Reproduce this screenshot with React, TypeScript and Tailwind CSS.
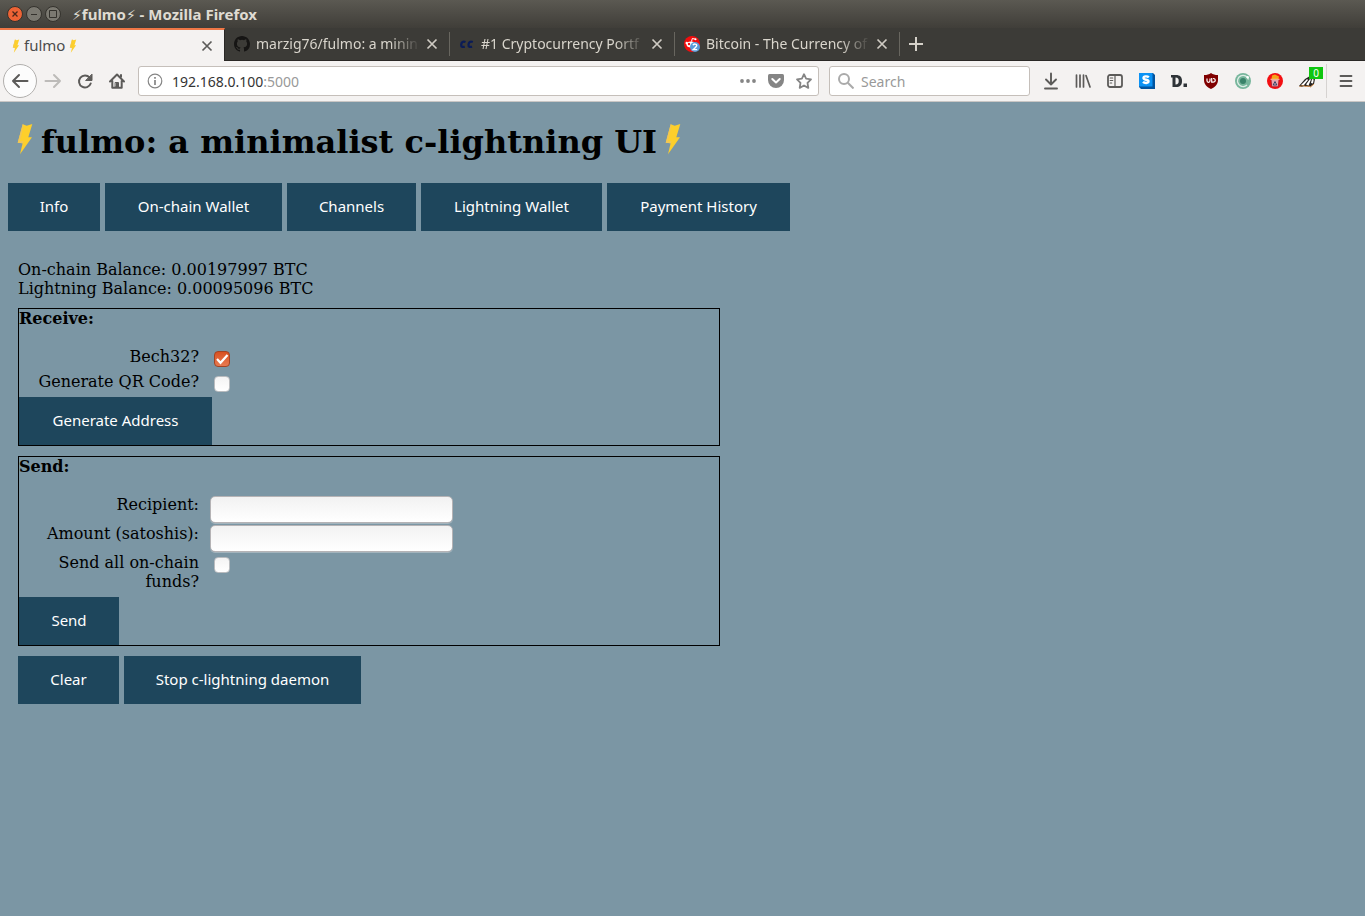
import type { ReactNode } from "react";

function Bolt({ className }: { className?: string }) {
  return (
    <svg viewBox="0 0 16 32" className={className} aria-hidden="true">
      <path d="M5.700 1.300l4 1.400L15.300 1l-4 13.300H15L3 31.300l2.700-11-5-.6z" fill="#fdcf2b" />
      <path d="M.7 19.700l5-18.400.9.400L3 18.200l3.500-.2L3 31.300l2.700-11z" fill="#f0c658" />
    </svg>
  );
}

function CloseIcon() {
  return (
    <svg viewBox="0 0 12 12" className="size-3" aria-hidden="true">
      <path d="M1.500 1.500l9 9M10.500 1.500l-9 9" stroke="currentColor" strokeWidth="1.700" />
    </svg>
  );
}

function GithubIcon() {
  return (
    <svg viewBox="0 0 16 16" className="size-4 shrink-0" fill="#161514" aria-hidden="true">
      <path d="M8 0C3.58 0 0 3.58 0 8c0 3.54 2.29 6.53 5.47 7.59.4.07.55-.17.55-.38 0-.19-.01-.82-.01-1.49-2.01.37-2.53-.49-2.69-.94-.09-.23-.48-.94-.82-1.13-.28-.15-.68-.52-.01-.53.63-.01 1.08.58 1.23.82.72 1.21 1.87.87 2.33.66.07-.52.28-.87.51-1.07-1.78-.2-3.64-.89-3.64-3.95 0-.87.31-1.59.82-2.15-.08-.2-.36-1.02.08-2.12 0 0 .67-.21 2.2.82a7.6 7.6 0 0 1 4 0c1.53-1.04 2.2-.82 2.2-.82.44 1.1.16 1.92.08 2.12.51.56.82 1.27.82 2.15 0 3.07-1.87 3.75-3.65 3.95.29.25.54.73.54 1.48 0 1.07-.01 1.93-.01 2.2 0 .21.15.46.55.38A8.01 8.01 0 0 0 16 8c0-4.42-3.58-8-8-8z" />
    </svg>
  );
}

function CcIcon() {
  return (
    <svg viewBox="0 0 16 16" className="size-4 shrink-0" fill="none" stroke="#0b1c56" strokeWidth="2.200" aria-hidden="true">
      <path d="M6.500 6C4 5 2.500 6 2.200 8.500c-.2 2.400 1.300 2.800 3.600 2.200M13.800 6c-2.500-1-4 0-4.300 2.500-.2 2.400 1.300 2.800 3.600 2.200" />
    </svg>
  );
}

function RedditIcon() {
  return (
    <svg viewBox="0 0 16 16" className="size-4 shrink-0" aria-hidden="true">
      <circle cx="8" cy="8" r="8" fill="#f20d0d" />
      <path d="M7.500 5.500l.8-3 2.700.6" stroke="#fff" fill="none" />
      <ellipse cx="7" cy="8.500" rx="4.500" ry="3" fill="#fff" />
      <circle cx="2.700" cy="7" r="1.200" fill="#fff" />
      <circle cx="11.500" cy="3.300" r="1" fill="#fff" />
      <circle cx="5" cy="8" r="1.200" fill="#f20d0d" />
      <circle cx="11" cy="11" r="5" fill="#5b9bd8" />
      <path d="M9 9.300C9.500 7.500 13 7.700 12.700 9.700c-.2 1.300-2 2.400-3.400 3.900H13.200" fill="none" stroke="#fff" strokeWidth="1.400" />
    </svg>
  );
}

function Tab({ icon, title }: { icon: ReactNode; title: string }) {
  return (
    <div className="flex w-[225px] shrink-0 items-center">
      <div className="flex w-[224px] items-center gap-1.5 pr-[11px] pl-[9px]">
        {icon}
        <a href="#tab" className="flex-1 overflow-hidden whitespace-nowrap text-[#d9d5cc] [mask-image:linear-gradient(to_right,#000_82%,transparent)]">
          {title}
        </a>
        <button aria-label={`Close ${title}`} className="text-[#cfcbc3]">
          <CloseIcon />
        </button>
      </div>
      <span className="h-6 w-px bg-[#68665f]" />
    </div>
  );
}

function ToolButton({ label, children }: { label: string; children: ReactNode }) {
  return (
    <button aria-label={label} className="flex size-8 shrink-0 items-center justify-center text-[#5c5b59]">
      {children}
    </button>
  );
}

function Glyph({ children }: { children: ReactNode }) {
  return (
    <svg viewBox="0 0 16 16" className="size-4 overflow-visible" fill="none" stroke="currentColor" strokeWidth="2" strokeLinecap="round" strokeLinejoin="round" aria-hidden="true">
      {children}
    </svg>
  );
}

function TitleBar() {
  return (
    <div className="flex h-7 items-center gap-[3px] bg-linear-to-b from-[#5b5952] to-[#403e39] pl-[7px]">
      <button aria-label="Close window" className="rounded-full">
        <svg viewBox="0 0 16 16" className="size-4">
          <circle cx="8" cy="8" r="7.500" fill="#ed6335" stroke="#34322d" />
          <path d="M5.500 5.500l5 5M10.500 5.500l-5 5" stroke="#49271a" strokeWidth="1.300" />
        </svg>
      </button>
      <button aria-label="Minimize window">
        <svg viewBox="0 0 16 16" className="size-4">
          <circle cx="8" cy="8" r="7.500" fill="#7b7971" stroke="#34322d" />
          <path d="M5 8.500h6" stroke="#34322d" />
        </svg>
      </button>
      <button aria-label="Maximize window">
        <svg viewBox="0 0 16 16" className="size-4">
          <circle cx="8" cy="8" r="7.500" fill="#7b7971" stroke="#34322d" />
          <path d="M4.500 4.500h7v7h-7z" fill="none" stroke="#34322d" />
        </svg>
      </button>
      <span className="pl-2 text-[15px] leading-5 font-bold text-[#dfdbd2]">
        <span className="font-['DejaVu_Sans',sans-serif] text-sm font-normal">⚡</span>fulmo
        <span className="font-['DejaVu_Sans',sans-serif] text-sm font-normal">⚡</span> - Mozilla Firefox
      </span>
    </div>
  );
}

function TabBar() {
  return (
    <div className="flex h-[33px] border-b border-[#2a2826] bg-[#3c3b37] text-sm">
      <div className="-mb-px flex w-[225px] shrink-0 items-center border-t-2 border-r border-t-[#f07746] border-r-[#2a2826] bg-[#f4f2f1] pr-[11px] pl-3">
        <Bolt className="mr-1 h-3.5 w-2" />
        <a href="#fulmo" className="text-[15px] text-[#4c4c4c]">fulmo</a>
        <Bolt className="ml-1 h-3.5 w-2" />
        <button aria-label="Close fulmo" className="ml-auto text-[#5c5b59]">
          <CloseIcon />
        </button>
      </div>
      <Tab icon={<GithubIcon />} title="marzig76/fulmo: a minin" />
      <Tab icon={<CcIcon />} title="#1 Cryptocurrency Portf" />
      <Tab icon={<RedditIcon />} title="Bitcoin - The Currency of" />
      <button aria-label="New tab" className="flex w-8 items-center justify-center text-[#d5d1c9]">
        <svg viewBox="0 0 14 14" className="size-3.5">
          <path d="M7 0v14M0 7h14" stroke="currentColor" strokeWidth="2" />
        </svg>
      </button>
    </div>
  );
}

function Toolbar() {
  return (
    <div className="flex h-[41px] items-center border-b border-[#c9c6c4] bg-[#f4f2f1] px-[3px] text-sm">
      <button aria-label="Back" className="flex size-[34px] shrink-0 items-center justify-center rounded-full border border-[#b1afad] bg-[#fcfcfc] text-[#5c5b59]">
        <Glyph>
          <path d="M15.500 8H1M7 2L1 8l6 6" />
        </Glyph>
      </button>
      <button aria-label="Forward" className="flex size-8 shrink-0 items-center justify-center text-[#bdbbb9]">
        <Glyph>
          <path d="M.5 8H15M9 2l6 6-6 6" />
        </Glyph>
      </button>
      <ToolButton label="Reload">
        <Glyph>
          <path d="M12.600 4.600A6 6 0 1 0 13.700 10.500" />
          <path d="M15 1.500v6H9z" fill="currentColor" strokeWidth="1" />
        </Glyph>
      </ToolButton>
      <ToolButton label="Home">
        <Glyph>
          <path d="M1 8.500L8 1.500l7 7M3.300 8v6.700h9.400V8M8 14v-3.500M12 2v2" />
          <path d="M6.500 9.500h3V14h-3z" strokeWidth="1" />
        </Glyph>
      </ToolButton>
      <label className="ml-[5px] flex h-[30px] flex-1 items-center rounded-[3px] border border-[#c5bfba] bg-white pr-1.5 pl-2">
        <svg viewBox="0 0 16 16" className="size-4 shrink-0" fill="none" stroke="#858585" aria-hidden="true">
          <circle cx="8" cy="8" r="6.800" strokeWidth="1.200" />
          <path d="M8 7v5M8 4v1.700" strokeWidth="1.700" />
        </svg>
        <span className="grid flex-1 pt-px pl-[9px]">
          <input aria-label="Address" defaultValue="192.168.0.100:5000" className="col-start-1 row-start-1 w-full bg-transparent text-transparent outline-none" />
          <span className="pointer-events-none col-start-1 row-start-1 text-[#343434]">
            192.168.0.100<span className="text-[#999]">:5000</span>
          </span>
        </span>
        <span className="flex items-center gap-3 text-[#858585]">
          <button aria-label="Page actions">
            <svg viewBox="0 0 16 16" className="size-4" fill="currentColor">
              <circle cx="2" cy="8" r="1.900" />
              <circle cx="8" cy="8" r="1.900" />
              <circle cx="14" cy="8" r="1.900" />
            </svg>
          </button>
          <button aria-label="Save to Pocket">
            <svg viewBox="0 0 16 16" className="size-4">
              <path d="M1.500 1h13Q16 1 16 2.500V7A8 8 0 0 1 0 7V2.500Q0 1 1.500 1z" fill="currentColor" />
              <path d="M4.300 6L8 9.500 11.700 6" fill="none" stroke="#fff" strokeWidth="2" strokeLinecap="round" strokeLinejoin="round" />
            </svg>
          </button>
          <button aria-label="Bookmark">
            <Glyph>
              <path d="M8 1.200l2.100 4.500 4.900.7-3.500 3.500.8 5L8 12.500l-4.300 2.400.8-5L1 6.400l4.900-.7z" strokeWidth="1.800" />
            </Glyph>
          </button>
        </span>
      </label>
      <label className="mr-[5px] ml-2.5 flex h-[30px] w-[201px] shrink-0 items-center gap-[7px] rounded-[3px] border border-[#c5bfba] bg-white px-2">
        <svg viewBox="0 0 16 16" className="size-4 shrink-0" fill="none" stroke="#aaa" strokeWidth="2" aria-hidden="true">
          <circle cx="6" cy="6" r="5" />
          <path d="M9.800 9.800l5.700 5.700" />
        </svg>
        <input aria-label="Search" placeholder="Search" className="w-full min-w-0 bg-transparent pt-px outline-none placeholder:text-[#999]" />
      </label>
      <ToolButton label="Downloads">
        <Glyph>
          <path d="M8 .5v11M3 6.500l5 5 5-5M2 15.500h12" strokeWidth="1.900" />
        </Glyph>
      </ToolButton>
      <ToolButton label="Library">
        <Glyph>
          <path d="M1.500 2v12M5 2v12M8.500 2v12M11 2.500L15 14" strokeWidth="1.700" />
        </Glyph>
      </ToolButton>
      <ToolButton label="Sidebars">
        <Glyph>
          <rect x="1" y="2" width="14" height="12" rx="2" strokeWidth="1.800" />
          <path d="M8 2v12M3.200 5h2.500M3.200 7.500h2.500M3.200 10h1.500" strokeWidth="1.200" />
        </Glyph>
      </ToolButton>
      <ToolButton label="Stylish">
        <svg viewBox="0 0 16 16" className="size-4">
          <path d="M0 0h14l2 2v14H2l-2-2z" fill="#02549f" />
          <path d="M0 0h13.500v13.500H0z" fill="#0c93f5" />
          <path d="M9.800 4.400C8.500 3 4.500 3 4.500 5c0 2.300 5 1.200 5 3.300 0 2.200-4 2-5.500.5" fill="none" stroke="#fff" strokeWidth="2.400" />
        </svg>
      </ToolButton>
      <ToolButton label="Disconnect">
        <svg viewBox="0 0 16 16" className="size-4">
          <path d="M0 2h5c4 0 6 2 6 6s-2 6-6 6H1.500V4.500H0z" fill="#2f3438" />
          <path d="M4.500 4.500v7c2.500 0 3.200-1.200 3.200-3.500S7 4.500 4.500 4.500z" fill="#f4f2f1" />
          <path d="M12.500 10.500H16V14h-3.500z" fill="#2f3438" />
        </svg>
      </ToolButton>
      <ToolButton label="uBlock Origin">
        <svg viewBox="0 0 16 16" className="size-4">
          <path d="M8 0c2 1.500 4 2 7 2v5c0 4.500-3 7-7 9-4-2-7-4.500-7-9V2c3 0 5-.5 7-2z" fill="#800000" />
          <path d="M4 5.500v2.300c0 2 3 2 3 0V5.500M8.700 5v4.200h1.300c3 0 3-3.700 0-3.700" fill="none" stroke="#fff" strokeWidth="1.200" />
        </svg>
      </ToolButton>
      <ToolButton label="Privacy">
        <svg viewBox="0 0 16 16" className="size-4">
          <circle cx="8" cy="8" r="8" fill="#77b69c" />
          <path d="M13.500 6.500A5.600 5.600 0 1 0 12 12M2.800 9.500c1 3 3.500 4.300 6.500 4" fill="none" stroke="#dcece5" strokeWidth="1.300" />
          <circle cx="8" cy="8" r="3" fill="#398269" />
          <circle cx="12.700" cy="4.300" r="1.200" fill="#fff" />
        </svg>
      </ToolButton>
      <ToolButton label="Cookie cleaner">
        <svg viewBox="0 0 16 16" className="size-4">
          <circle cx="8" cy="8" r="8" fill="#f30f12" />
          <path d="M4 6.500h8l-.8 7.300H4.800z" fill="#e9a5ac" stroke="#a80c18" strokeWidth=".7" />
          <path d="M5 2.500l3-1 4 2-.5 2.500h-7z" fill="#f5a31a" />
          <path d="M3.500 6.300h9" stroke="#ffd0a7" />
          <path d="M8 8.500l1.800 3.500H6.200z" fill="none" stroke="#35466b" />
        </svg>
      </ToolButton>
      <button aria-label="Privacy Badger, 0 blocked" className="relative flex size-8 shrink-0 items-center justify-center">
        <svg viewBox="0 0 16 16" className="size-4">
          <path d="M0 13l6-7 5-3 5 3-1 5-4 3-5-1-4 1z" fill="#25221f" />
          <path d="M2 12l6-6 1 1-4 5zM7 11.500L11 6l1 .5-2.500 6zM12 10l1-4 1.700.5-.7 4z" fill="#fff" />
          <path d="M.5 13.500l4-1 1.500 1 4-.5 1.500 1 3.500-3" fill="none" stroke="#dc9653" />
        </svg>
        <span className="absolute top-[2px] right-0 flex h-3 w-3.5 items-center justify-center bg-[#0fc60f] text-[10px] leading-3 text-white">0</span>
      </button>
      <span className="mx-[3px] h-[34px] w-px bg-[#d6d3d1]" />
      <ToolButton label="Open menu">
        <Glyph>
          <path d="M2.500 3h11M2.500 8h11M2.500 13h11" strokeWidth="1.800" />
        </Glyph>
      </ToolButton>
    </div>
  );
}

function ActionButton({ width, children }: { width: string; children: ReactNode }) {
  return (
    <button className={`h-12 bg-[#1e465c] pb-0.5 font-['Noto_Sans',sans-serif] text-[15px] text-white ${width}`}>
      {children}
    </button>
  );
}

const checkboxStyle =
  "relative mt-1 ml-1 size-4 appearance-none rounded-[4px] border border-[#b9bcbf] bg-linear-to-b from-[#f4f4f4] to-white checked:border-[#a34323] checked:from-[#d8501f] checked:to-[#e87a50]";

function CheckRow({ id, label, checked = false }: { id: string; label: string; checked?: boolean }) {
  return (
    <>
      <label htmlFor={id} className="pb-1.5 text-right">{label}</label>
      <span className="grid size-fit">
        <input id={id} type="checkbox" defaultChecked={checked} className={`peer col-start-1 row-start-1 ${checkboxStyle}`} />
        <svg viewBox="0 0 16 16" className="pointer-events-none invisible relative col-start-1 row-start-1 mt-1 ml-1 size-4 peer-checked:visible" aria-hidden="true">
          <path d="M3 8l3.500 3.800L13.500 4" fill="none" stroke="#fff" strokeWidth="2.200" />
        </svg>
      </span>
    </>
  );
}

function TextRow({ id, label }: { id: string; label: string }) {
  return (
    <>
      <label htmlFor={id} className="h-[29px] text-right">{label}</label>
      <input id={id} type="text" className="mt-px h-[27px] w-[243px] rounded-[5px] border border-[#b5b3b5] bg-linear-to-b from-[#f2f2f2] to-white px-2 shadow-[0_1px_0_#a3b4bd]" />
    </>
  );
}

function Panel({ title, action, children }: { title: string; action: ReactNode; children: ReactNode }) {
  return (
    <section className="mt-2.5 max-w-[702px] border border-black">
      <h2 className="font-bold">{title}</h2>
      <div className="mt-[19px] grid grid-cols-[180px_1fr] gap-x-[11px]">{children}</div>
      {action}
    </section>
  );
}

export default function App() {
  return (
    <div className="flex min-h-screen flex-col bg-[#7b96a4] font-['Noto_Sans',sans-serif]">
      <header>
        <TitleBar />
        <TabBar />
        <Toolbar />
      </header>
      <main className="flex-1 px-2 pt-[21px] pb-8 font-['DejaVu_Serif',serif] text-base leading-[19px] text-black">
        <h1 className="flex items-start gap-2 pl-[9px] text-[32px] leading-[38px] font-bold">
          <Bolt className="h-8 w-4" />
          fulmo: a minimalist c-lightning UI
          <Bolt className="h-8 w-4" />
        </h1>
        <nav className="mt-[22px] flex flex-wrap gap-[5px]">
          <ActionButton width="w-[92px]">Info</ActionButton>
          <ActionButton width="w-[177px]">On-chain Wallet</ActionButton>
          <ActionButton width="w-[129px]">Channels</ActionButton>
          <ActionButton width="w-[181px]">Lightning Wallet</ActionButton>
          <ActionButton width="w-[183px]">Payment History</ActionButton>
        </nav>
        <div className="px-2.5 pt-[29px]">
          <p>On-chain Balance: 0.00197997 BTC</p>
          <p>Lightning Balance: 0.00095096 BTC</p>
          <Panel title="Receive:" action={<ActionButton width="w-[193px]">Generate Address</ActionButton>}>
            <CheckRow id="bech32" label="Bech32?" checked />
            <CheckRow id="qr" label="Generate QR Code?" />
          </Panel>
          <Panel title="Send:" action={<ActionButton width="w-[100px]">Send</ActionButton>}>
            <TextRow id="recipient" label="Recipient:" />
            <TextRow id="amount" label="Amount (satoshis):" />
            <CheckRow id="sendall" label="Send all on-chain funds?" />
          </Panel>
          <div className="mt-2.5 flex gap-[5px]">
            <ActionButton width="w-[101px]">Clear</ActionButton>
            <ActionButton width="w-[237px]">Stop c-lightning daemon</ActionButton>
          </div>
        </div>
      </main>
    </div>
  );
}
